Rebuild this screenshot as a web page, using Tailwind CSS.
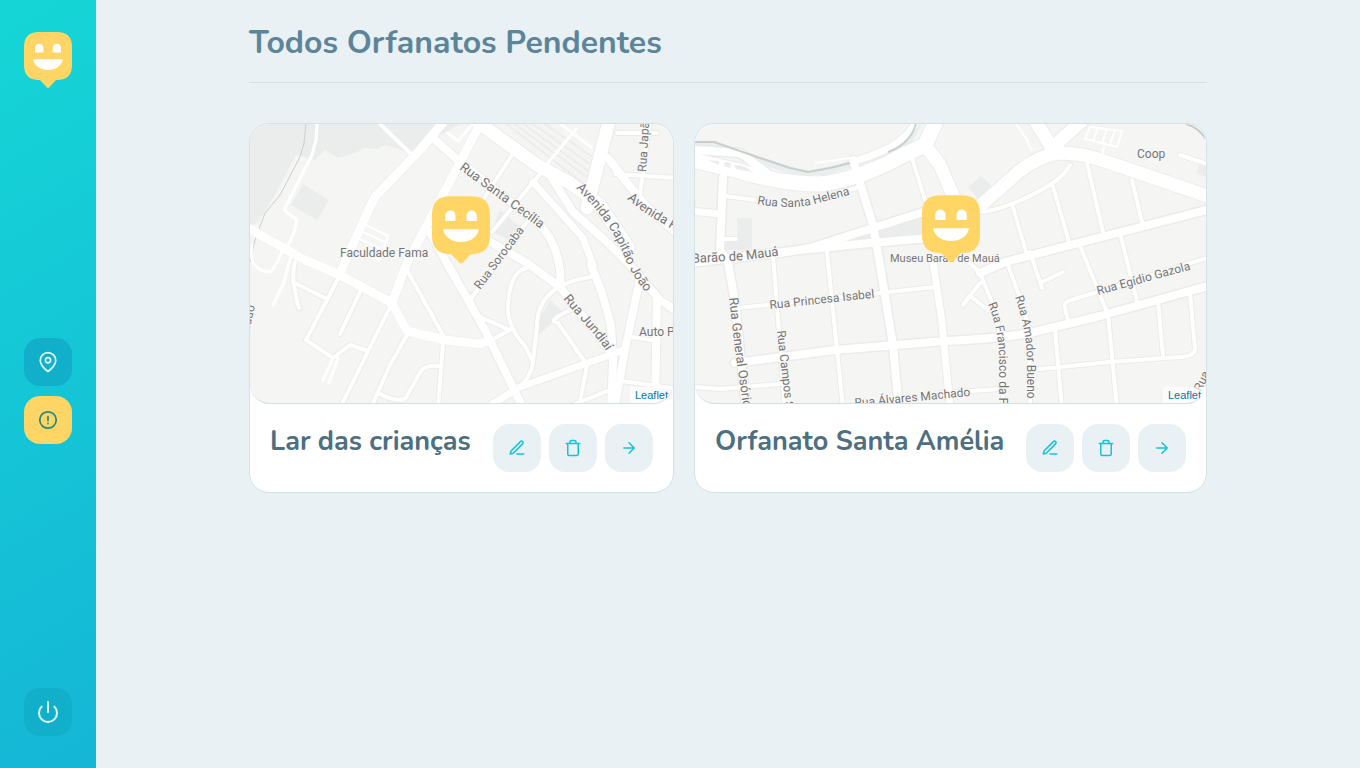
<!DOCTYPE html>
<html lang="pt-BR">
<head>
<meta charset="utf-8">
<meta name="viewport" content="width=device-width, initial-scale=1">
<title>Orfanatos Pendentes</title>
<script src="https://cdn.jsdelivr.net/npm/@tailwindcss/browser@4"></script>
</head>
<body class="flex min-h-screen bg-[#e9f1f5] font-['Nunito','Lato',sans-serif]">

<svg class="hidden" aria-hidden="true">
  <symbol id="happy" viewBox="0 0 48 56">
    <path fill="#ffd666" d="M15 0h18c10 0 15 5 15 15v18c0 10-5 15-15 15h-1l-6.600 7.200a2 2 0 0 1-2.800 0L16 48h-1C5 48 0 43 0 33V15C0 5 5 0 15 0z"/>
    <path fill="#fff" d="M11 20.500V16a4.200 4.200 0 0 1 8.400 0v4.500zM28.600 20.500V16a4.200 4.200 0 0 1 8.400 0v4.500zM10.200 27.300h27.600q1.200 0 .9 1C37 34.500 31 38 24 38S11 34.500 9.300 28.300q-.3-1 .9-1z"/>
  </symbol>
  <symbol id="edit" viewBox="0 0 24 24"><path d="M12 20h9M16.500 3.500a2.120 2.120 0 0 1 3 3L7 19l-4 1 1-4z"/></symbol>
  <symbol id="trash" viewBox="0 0 24 24"><path d="M3 6h18M19 6v14a2 2 0 0 1-2 2H7a2 2 0 0 1-2-2V6M8 6V4a2 2 0 0 1 2-2h4a2 2 0 0 1 2 2v2"/></symbol>
  <symbol id="arrow" viewBox="0 0 24 24"><path d="M5 12h14M12 5l7 7-7 7"/></symbol>
</svg>

<aside class="flex w-24 shrink-0 flex-col items-center justify-between bg-[linear-gradient(329.54deg,#15b6d6_0%,#15d6d6_100%)] py-8">
  <a href="#" aria-label="Início" class="pb-1.5"><svg class="h-14 w-12"><use href="#happy"/></svg></a>
  <nav class="flex flex-col gap-[10px]">
    <a href="#" aria-label="Orfanatos" class="flex size-12 items-center justify-center rounded-2xl bg-[#12afcb] text-[#dffcff]">
      <svg class="size-6" viewBox="0 0 28 28" fill="none" stroke="currentColor" stroke-width="2" stroke-linecap="round" stroke-linejoin="round"><path d="M23 12c0 7-9 13-9 13s-9-6-9-13a9 9 0 0 1 18 0z"/><circle cx="14" cy="12" r="3"/></svg>
    </a>
    <a href="#" aria-label="Pendentes" class="flex size-12 items-center justify-center rounded-2xl bg-[#ffd666] text-[#28877a]">
      <svg class="size-6" viewBox="0 0 28 28" fill="none" stroke="currentColor" stroke-width="2" stroke-linecap="round" stroke-linejoin="round"><circle cx="14" cy="14" r="9.600"/><path d="M14 10v4.500M14 18h.01"/></svg>
    </a>
  </nav>
  <button type="button" aria-label="Sair" class="flex size-12 items-center justify-center rounded-2xl bg-[#12afcb] text-[#dffcff]">
    <svg class="size-6" viewBox="0 0 24 24" fill="none" stroke="currentColor" stroke-width="2" stroke-linecap="round" stroke-linejoin="round"><path d="M18.360 6.640a9 9 0 1 1-12.730 0M12 2v10"/></svg>
  </button>
</aside>

<main class="min-w-0 flex-1">
  <div class="mx-auto max-w-[958px] pt-5">
    <h1 class="border-b border-[#d3e2e5] pb-4 text-[32px] leading-[46px] font-bold text-[#5c8599]">Todos Orfanatos Pendentes</h1>

    <div class="mt-10 grid grid-cols-[425fr_513fr] gap-5">

      <article class="overflow-hidden rounded-[20px] border border-[#d3e2e5] bg-white">
        <div class="relative overflow-hidden rounded-[20px] border-b border-[#d3dde5] bg-[#f5f5f4]">
          <svg class="block h-[279px] w-full font-['Roboto',sans-serif]" viewBox="250 124 423 279" preserveAspectRatio="xMidYMid slice" role="img" aria-label="Mapa de Lar das crianças">
            <g fill="#ebeded">
              <path d="M250 124H460L408 153 400 149 385 145 377 149 365 148 350 155 338 158 325 150 315 160 296 155 275 195 258 222 250 226z"/>
              <path d="M303 184l26 16-12 20-26-15zM492 232l8-22 22 18-12 12zM540 318l10-18 13 12-13 13-12 10z"/>
            </g>
            <path fill="none" stroke="#cbcdcd" d="M306 124l-2 19-4 14-20 38-15 18-10 27-5 22"/>
            <g fill="none" stroke-linejoin="round" stroke-linecap="round" stroke="#ebebea">
              <path stroke-width="10" d="M455 108l-35 42-45 47-10 21-26 57M250 229l55 31 35 15 52 28 15 28 38 9 35 4 10-4M478 128l-72 137-14 38"/>
              <path stroke-width="15" d="M462 112l21 14 54 39 33 18 30 22 28 42M611 114l-13 50-11 44"/>
              <path stroke-width="10" d="M433 138l27 24 80 63q16 16 20 45l1 18M430 232l18 33 37 65 38 78M550 175l23 37 34 30 23 23 30 35 18 12M489 241l38 22 33 24 50 64M591 265l10 25 10 35 2 35-2 50M640 278l-15 72-11 60M657 298l-2 110M608 158l17 22 20 25 36 32"/>
              <path stroke-width="9" d="M533 182l27 30 23 26 10 27M480 412l40-25 90-32 13-5"/>
              <path stroke-width="6" d="M380 124l30 29M512 155l-42 65M540 174l-48 58M527 222l-57 78M408 272l35 63M392 303l-52 105M407 335l-17 30-20 45M443 343l-5 65M380 394q15 8 25 5l16-28q5-6 18-5M340 275l-34 65 27 18 17-13 15 5M361 290l-21 44M295 262q-5 15 4 46M293 282l32 16M480 317l30 13M490 341l18-10M527 268q-18 3-19 40 0 20 17 38l8 16M597 276q-60 7-60 50l-4 36q-2 15-15 27M575 308q-30 13-17 15l29 42-8 42M570 406l40-16M617 133h40M615 174l63 4M650 120l-10 75M632 337l25 4M622 381l56 8"/>
            </g>
            <g fill="none" stroke-linejoin="round" stroke-linecap="round" stroke="#fff">
              <path stroke-width="9" d="M455 108l-35 42-45 47-10 21-26 57M250 229l55 31 35 15 52 28 15 28 38 9 35 4 10-4M478 128l-72 137-14 38"/>
              <path stroke-width="13" d="M462 112l21 14 54 39 33 18 30 22 28 42M611 114l-13 50-11 44"/>
              <path stroke-width="8" d="M433 138l27 24 80 63q16 16 20 45l1 18M430 232l18 33 37 65 38 78M550 175l23 37 34 30 23 23 30 35 18 12M489 241l38 22 33 24 50 64M591 265l10 25 10 35 2 35-2 50M640 278l-15 72-11 60M657 298l-2 110M608 158l17 22 20 25 36 32"/>
              <path stroke-width="7" d="M533 182l27 30 23 26 10 27M480 412l40-25 90-32 13-5"/>
              <path stroke-width="4" d="M380 124l30 29M512 155l-42 65M540 174l-48 58M527 222l-57 78M408 272l35 63M392 303l-52 105M407 335l-17 30-20 45M443 343l-5 65M380 394q15 8 25 5l16-28q5-6 18-5M340 275l-34 65 27 18 17-13 15 5M361 290l-21 44M295 262q-5 15 4 46M293 282l32 16M480 317l30 13M490 341l18-10M527 268q-18 3-19 40 0 20 17 38l8 16M597 276q-60 7-60 50l-4 36q-2 15-15 27M575 308q-30 13-17 15l29 42-8 42M570 406l40-16M617 133h40M615 174l63 4M650 120l-10 75M632 337l25 4M622 381l56 8"/>
              <path stroke-width="3" d="M317 124l-1 16-4 15-28 55 13 10-3 13-9 18M252 245q-5 25 18 27 5-3 15-27M291 256l-8 29-10 20M333 358l-10 22M338 358l-9 25M448 133l10 8 12-14"/>
              <path stroke-width="2" d="M366 225l22 11-8 24-20-8M363 232l22 10M360 239l21 10"/>
            </g>
            <g fill="none" stroke="#e7e9e9" stroke-width="2" stroke-dasharray="2 1">
              <path d="M512 122l76 56M521 122l67 49M530 122l60 42M545 124l46 32M504 122l80 62"/>
            </g>
            <path fill="none" stroke="#fff" stroke-width="3" d="M577 128l-35 42M558 122l34 26"/>
            <defs>
              <path id="a1" d="M459 169L541 229L560 243"/>
              <path id="a2" d="M576 188C603 215 617 236 626 261Q634 278 644 290L655 303"/>
              <path id="a3" d="M627 199L645 213L690 240"/>
              <path id="a4" d="M480 290L530 223"/>
              <path id="a5" d="M563 299L590 330Q603 345 612 360"/>
              <path id="a6" d="M646 172L650 110"/>
              <path id="a7" d="M246 345L259 288"/>
            </defs>
            <g fill="#757575" stroke="#f8f8f7" stroke-width="2" paint-order="stroke" font-size="13">
              <text font-size="12" x="340" y="257">Faculdade Fama</text>
              <text font-size="12" x="639" y="336">Auto Peças</text>
              <text><textPath href="#a1">Rua Santa Cecília</textPath></text>
              <text><textPath href="#a2">Avenida Capitão João</textPath></text>
              <text><textPath href="#a3">Avenida Ri</textPath></text>
              <text font-size="12"><textPath href="#a4">Rua Sorocaba</textPath></text>
              <text><textPath href="#a5">Rua Jundiaí</textPath></text>
              <text font-size="12"><textPath href="#a6">Rua Japão</textPath></text>
              <text font-size="12"><textPath href="#a7">abouao</textPath></text>
            </g>
            <use href="#happy" x="432" y="196" width="58" height="68"/>
          </svg>
          <a href="#" class="absolute right-0 bottom-0 bg-white/70 px-[5px] font-['Liberation_Sans',sans-serif] text-[11px] leading-4 text-[#0078a8]">Leaflet</a>
        </div>
        <div class="flex items-start justify-between p-5">
          <h2 class="text-[27px] leading-9 font-bold whitespace-nowrap text-[#4d6f80]">Lar das crianças</h2>
          <div class="flex gap-2 text-[#15c3d6]">
            <button type="button" aria-label="Editar" class="flex size-12 items-center justify-center rounded-2xl bg-[#e9f1f5]"><svg class="size-[18px]" fill="none" stroke="currentColor" stroke-width="2" stroke-linecap="round" stroke-linejoin="round"><use href="#edit"/></svg></button>
            <button type="button" aria-label="Excluir" class="flex size-12 items-center justify-center rounded-2xl bg-[#e9f1f5]"><svg class="size-[18px]" fill="none" stroke="currentColor" stroke-width="2" stroke-linecap="round" stroke-linejoin="round"><use href="#trash"/></svg></button>
            <a href="#" aria-label="Ver orfanato" class="flex size-12 items-center justify-center rounded-2xl bg-[#e9f1f5]"><svg class="size-[18px]" fill="none" stroke="currentColor" stroke-width="2" stroke-linecap="round" stroke-linejoin="round"><use href="#arrow"/></svg></a>
          </div>
        </div>
      </article>

      <article class="overflow-hidden rounded-[20px] border border-[#d3e2e5] bg-white">
        <div class="relative overflow-hidden rounded-[20px] border-b border-[#d3dde5] bg-[#f5f5f4]">
          <svg class="block h-[279px] w-full font-['Roboto',sans-serif]" viewBox="695 124 511 279" preserveAspectRatio="xMidYMid slice" role="img" aria-label="Mapa de Orfanato Santa Amélia">
            <g fill="#ebeded">
              <path d="M737 218h15v32h-32l4-10h13zM840 242l35-11 47-14v20zM968 187l13-11 12 11-13 14zM1199 165h8v12l-10-3z"/>
            </g>
            <path fill="none" stroke="#e9eeee" stroke-width="7" d="M695 144h19l46 16 30 10 18 4 22-4 60-18 18-10 10-18"/>
            <g fill="none" stroke-linejoin="round" stroke-linecap="round" stroke="#ebebea">
              <path stroke-width="17" d="M688 159l47 11q45 14 85 14 40-5 80-27l25-12 15-32"/>
              <path stroke-width="15" d="M925 145l15 20 15 35 10 40M978 208l37-33q20-18 43-22 20 0 37 5 60 20 115 39M1030 112l22 36 33-30"/>
              <path stroke-width="11" d="M695 150l45 3 27 20M723 178l-3 72 8 12 7 40 11 106M853 160l20 65 7 40 13 80 6 65M690 263l90-10 30-5 63-20 60-19M740 257l60-7 70-7 60-5M980 273l25-11 205-53M735 363l100-13 110-9q50-2 85-8l70-17 115-32"/>
              <path stroke-width="9" d="M933 262l9 60 8 85M691 211l30 3M858 160q45-13 58-38"/>
              <path stroke-width="6" d="M725 196l30 4M830 195l30-8M912 158l13 42M983 212q30-5 67-27 15-10 20-20M1052 183l17 59M1087 163l16 69M1132 180l10 42M1013 207l13 45M965 258l15 15 15 37q8 30 8 98M1007 262l18 50q5 25 5 96M1030 252l12 36M1042 282l21-10M980 283l-17 22M970 296l18 14M1081 248l27 67 9 93M1121 237l17 68M1068 320l-3-12q-2-6 6-8l139-43M1055 330l7 78M1158 302l5 53M1190 293l5 55q1 8-15 9l-70 5-80 8M738 308l197-21M773 255l12 153M827 252l16 156M695 387l25 2 60-5M940 393l60-4M724 239h12M1180 155l27 9M1200 408l14-40"/>
            </g>
            <g fill="none" stroke-linejoin="round" stroke-linecap="round" stroke="#fff">
              <path stroke-width="15" d="M688 159l47 11q45 14 85 14 40-5 80-27l25-12 15-32"/>
              <path stroke-width="13" d="M925 145l15 20 15 35 10 40M978 208l37-33q20-18 43-22 20 0 37 5 60 20 115 39M1030 112l22 36 33-30"/>
              <path stroke-width="8" d="M695 150l45 3 27 20M723 178l-3 72 8 12 7 40 11 106M853 160l20 65 7 40 13 80 6 65M690 263l90-10 30-5 63-20 60-19M740 257l60-7 70-7 60-5M980 273l25-11 205-53M735 363l100-13 110-9q50-2 85-8l70-17 115-32"/>
              <path stroke-width="7" d="M933 262l9 60 8 85M691 211l30 3M858 160q45-13 58-38"/>
              <path stroke-width="4" d="M725 196l30 4M830 195l30-8M912 158l13 42M983 212q30-5 67-27 15-10 20-20M1052 183l17 59M1087 163l16 69M1132 180l10 42M1013 207l13 45M965 258l15 15 15 37q8 30 8 98M1007 262l18 50q5 25 5 96M1030 252l12 36M1042 282l21-10M980 283l-17 22M970 296l18 14M1081 248l27 67 9 93M1121 237l17 68M1068 320l-3-12q-2-6 6-8l139-43M1055 330l7 78M1158 302l5 53M1190 293l5 55q1 8-15 9l-70 5-80 8M738 308l197-21M773 255l12 153M827 252l16 156M695 387l25 2 60-5M940 393l60-4M724 239h12M1180 155l27 9M1200 408l14-40"/>
              <path stroke-width="2" d="M1015 122l12 18 4 10M1090 127l32 4-5 16-32-8zM1098 128l-5 13M1107 129l-5 14M1115 130l-5 15M1104 147l-2 10M816 163l34-5"/>
            </g>
            <path fill="none" stroke="#c9cfcf" stroke-width="2" d="M695 142h19l46 16 30 10 18 4 22-4 20-5M888 152q22-8 28-28"/>
            <path fill="#ebeded" d="M707 160l12 1v4zM725 162l6 1-1 5-6-2zM734 165q12 0 18 7l-16-3z"/>
            <path fill="none" stroke="#c5cbcb" stroke-width="2" d="M1186 124q12 3 20 15"/>
            <defs>
              <path id="b1" d="M757 204Q790 210 815 204L860 192"/>
              <path id="b2" d="M692 263L745 260L800 253"/>
              <path id="b3" d="M770 309L890 296"/>
              <path id="b4" d="M729 298L735 350L745 420"/>
              <path id="b5" d="M777 331L787 420"/>
              <path id="b6" d="M988 304Q999 330 999 360V430"/>
              <path id="b7" d="M1015 297Q1027 330 1027 365V420"/>
              <path id="b8" d="M1098 295L1200 267"/>
              <path id="b9" d="M855 407L980 395"/>
              <path id="b10" d="M1201 392L1215 362"/>
            </defs>
            <g fill="#757575" stroke="#f8f8f7" stroke-width="2" paint-order="stroke" font-size="12">
              <text x="1137" y="158">Coop</text>
              <text font-size="11" x="890" y="262">Museu Barão de Mauá</text>
              <text><textPath href="#b1">Rua Santa Helena</textPath></text>
              <text font-size="13"><textPath href="#b2">Barão de Mauá</textPath></text>
              <text><textPath href="#b3">Rua Princesa Isabel</textPath></text>
              <text font-size="13"><textPath href="#b4">Rua General Osório</textPath></text>
              <text><textPath href="#b5">Rua Campos Sales</textPath></text>
              <text><textPath href="#b6">Rua Francisco da Paz</textPath></text>
              <text><textPath href="#b7">Rua Amador Bueno</textPath></text>
              <text><textPath href="#b8">Rua Egídio Gazola</textPath></text>
              <text><textPath href="#b9">Rua Álvares Machado</textPath></text>
              <text><textPath href="#b10">Rua</textPath></text>
            </g>
            <use href="#happy" x="922" y="195" width="58" height="68"/>
          </svg>
          <a href="#" class="absolute right-0 bottom-0 bg-white/70 px-[5px] font-['Liberation_Sans',sans-serif] text-[11px] leading-4 text-[#0078a8]">Leaflet</a>
        </div>
        <div class="flex items-start justify-between p-5">
          <h2 class="text-[27px] leading-9 font-bold whitespace-nowrap text-[#4d6f80]">Orfanato Santa Amélia</h2>
          <div class="flex gap-2 text-[#15c3d6]">
            <button type="button" aria-label="Editar" class="flex size-12 items-center justify-center rounded-2xl bg-[#e9f1f5]"><svg class="size-[18px]" fill="none" stroke="currentColor" stroke-width="2" stroke-linecap="round" stroke-linejoin="round"><use href="#edit"/></svg></button>
            <button type="button" aria-label="Excluir" class="flex size-12 items-center justify-center rounded-2xl bg-[#e9f1f5]"><svg class="size-[18px]" fill="none" stroke="currentColor" stroke-width="2" stroke-linecap="round" stroke-linejoin="round"><use href="#trash"/></svg></button>
            <a href="#" aria-label="Ver orfanato" class="flex size-12 items-center justify-center rounded-2xl bg-[#e9f1f5]"><svg class="size-[18px]" fill="none" stroke="currentColor" stroke-width="2" stroke-linecap="round" stroke-linejoin="round"><use href="#arrow"/></svg></a>
          </div>
        </div>
      </article>

    </div>
  </div>
</main>
</body>
</html>
